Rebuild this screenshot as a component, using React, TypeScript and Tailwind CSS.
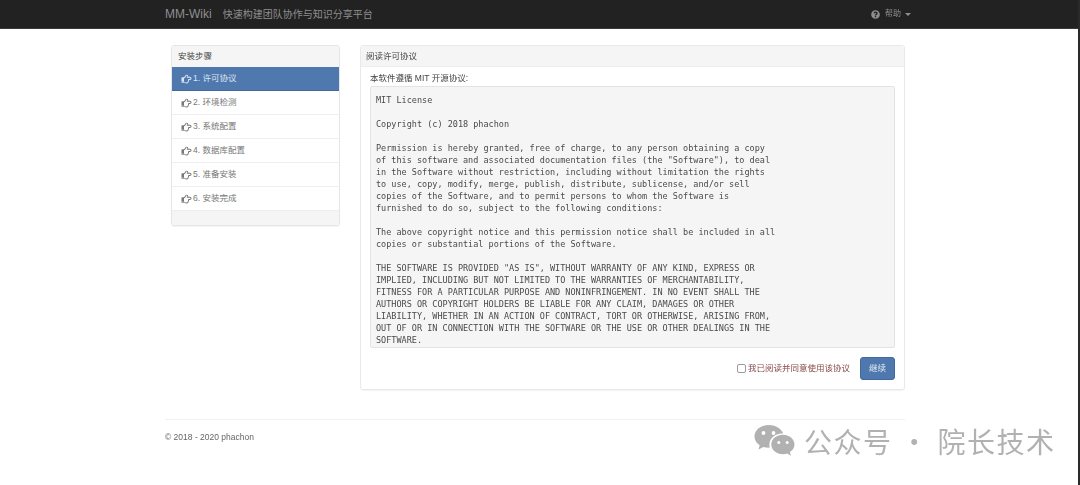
import { FaRegHandPointRight, FaQuestionCircle } from "react-icons/fa";

const sans = "font-['Liberation_Sans','Noto_Sans_CJK_SC',sans-serif]";
const steps = ["1. 许可协议", "2. 环境检测", "3. 系统配置", "4. 数据库配置", "5. 准备安装", "6. 安装完成"];
const license = `MIT License

Copyright (c) 2018 phachon

Permission is hereby granted, free of charge, to any person obtaining a copy
of this software and associated documentation files (the "Software"), to deal
in the Software without restriction, including without limitation the rights
to use, copy, modify, merge, publish, distribute, sublicense, and/or sell
copies of the Software, and to permit persons to whom the Software is
furnished to do so, subject to the following conditions:

The above copyright notice and this permission notice shall be included in all
copies or substantial portions of the Software.

THE SOFTWARE IS PROVIDED "AS IS", WITHOUT WARRANTY OF ANY KIND, EXPRESS OR
IMPLIED, INCLUDING BUT NOT LIMITED TO THE WARRANTIES OF MERCHANTABILITY,
FITNESS FOR A PARTICULAR PURPOSE AND NONINFRINGEMENT. IN NO EVENT SHALL THE
AUTHORS OR COPYRIGHT HOLDERS BE LIABLE FOR ANY CLAIM, DAMAGES OR OTHER
LIABILITY, WHETHER IN AN ACTION OF CONTRACT, TORT OR OTHERWISE, ARISING FROM,
OUT OF OR IN CONNECTION WITH THE SOFTWARE OR THE USE OR OTHER DEALINGS IN THE
SOFTWARE.`;

export default function App() {
  return (
    <div className={`relative h-[485px] w-[1080px] overflow-hidden bg-white ${sans} text-[#5a5a5a]`}>
      <div className="blur-[0.35px]">
        <header className="flex h-[29px] items-center border-b border-[#3a3a3a] bg-[#222222] pl-[165px] pr-[169px]">
          <span className="text-[12px] text-[#8f8f8f]">MM-Wiki</span>
          <span className="ml-[11px] text-[10px] text-[#8f8f8f]">快速构建团队协作与知识分享平台</span>
          <div className="ml-auto flex items-center text-[8px] text-[#8f8f8f]">
            <FaQuestionCircle className="mr-[5px] h-[9px] w-[9px]" />
            <span>帮助</span>
            <span className="ml-[4px] h-0 w-0 border-x-[3px] border-t-[3px] border-x-transparent border-t-[#8f8f8f]" />
          </div>
        </header>

        <main className="ml-[165px] w-[740px]">
          <div className="flex items-start pt-[16px]">
            <aside className="ml-[6px] w-[169px] overflow-hidden rounded-[3px] border border-[#e6e6e6] shadow-[0_1px_1px_rgba(0,0,0,0.05)]">
              <div className="flex h-[21px] items-center bg-[#f5f5f5] pl-[6px] text-[8.5px] text-[#444444]">安装步骤</div>
              {steps.map((s, i) => (
                <div
                  key={s}
                  className={`flex h-[24px] items-center gap-[1px] border-b pl-[9px] text-[8.5px] ${
                    i === 0 ? "border-[#44689a] bg-[#4f79ae] text-[#dfe7f1]" : "border-[#eeeeee] bg-white text-[#777777]"
                  }`}
                >
                  <FaRegHandPointRight className="h-[10px] w-[11px]" />
                  <span>{s}</span>
                </div>
              ))}
              <div className="h-[14px] bg-[#f5f5f5]" />
            </aside>

            <section className="ml-[20px] h-[345px] w-[545px] rounded-[3px] border border-[#e9e9e9] shadow-[0_1px_1px_rgba(0,0,0,0.05)]">
              <div className="flex h-[21px] items-center border-b border-[#eeeeee] bg-[#f5f5f5] pl-[5px] text-[8.5px] text-[#444444]">阅读许可协议</div>
              <div className="px-[9px] pt-[5px]">
                <p className="h-[14px] pl-[0px] text-[8.5px] leading-[12px] text-[#444444]">本软件遵循 MIT 开源协议:</p>
                <pre className="mt-[0px] h-[262px] rounded-[2px] border border-[#e3e3e3] bg-[#f5f5f5] pl-[5px] pt-[6.5px] font-['DejaVu_Sans_Mono',monospace] text-[8.5px] leading-[12px] text-[#4a4a4a]">
                  {license}
                </pre>
                <div className="mt-[9px] flex items-center justify-end">
                  <span className="h-[9px] w-[9px] rounded-[2px] border border-[#9a9a9a] bg-white" />
                  <span className="ml-[2px] text-[8.5px] text-[#8a4a4a]">我已阅读并同意使用该协议</span>
                  <button className="ml-[10px] h-[23px] w-[35px] rounded-[3px] border border-[#44689a] bg-[#4f79ae] text-[8.5px] text-[#e6ecf4]">继续</button>
                </div>
              </div>
            </section>
          </div>

          <footer className="mt-[29px] border-t border-[#f2f2f2] pt-[11px] text-[8.5px] text-[#666666]">© 2018 - 2020 phachon</footer>
        </main>
      </div>

      <div className="absolute left-[754px] top-[424px] flex items-center text-[#b1b1b1]">
        <svg width="41" height="34" viewBox="0 0 41 34" fill="#b1b1b1">
          <path d="M14.5 1C6.8 1 .5 6 .5 12.4c0 3.6 2 6.6 5.2 8.8L4.5 25.5l4.9-2.6c1.7.5 3.3.8 5.1.8.4 0 .9 0 1.3-.1-.3-1-.4-2-.4-3 0-6.2 5.4-11.2 12.5-11.2.5 0 .9 0 1.3.1C27 4.2 21.2 1 14.5 1z" />
          <path d="M40.5 20.5c0-5.4-5.3-9.7-11.5-9.7-6.600 0-11.700 4.300-11.700 9.700s5.100 9.700 11.700 9.700c1.400 0 2.800-.3 4.100-.7l3.800 2.200-1-3.600c2.800-1.900 4.600-4.600 4.600-7.600z" />
          <circle cx="9.500" cy="9" r="1.900" fill="#fff" />
          <circle cx="19.500" cy="9" r="1.900" fill="#fff" />
          <circle cx="24.800" cy="18.500" r="1.500" fill="#fff" />
          <circle cx="33.200" cy="18.500" r="1.500" fill="#fff" />
        </svg>
        <span className="ml-[9px] whitespace-nowrap font-['Noto_Sans_CJK_SC',sans-serif] text-[28px] leading-[34px] tracking-[1.5px]">公众号 · 院长技术</span>
      </div>
      <div className="absolute right-0 top-0 h-full w-[2px] bg-[#2a2a2a]" />
    </div>
  );
}
